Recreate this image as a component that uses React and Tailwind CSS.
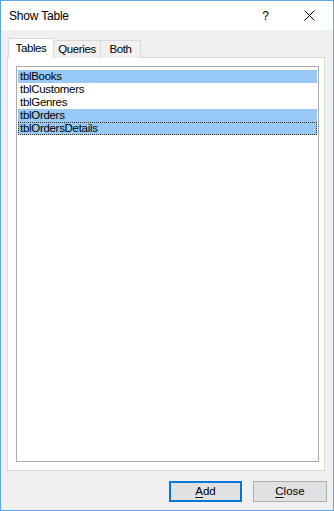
import React from "react";

const font = { fontFamily: '"Liberation Sans", Arial, sans-serif' };

function Row({ label, selected, focused }) {
  return (
    <div
      className={
        "h-[13px] leading-[13px] pl-[2px] text-[11.5px] tracking-[-0.3px] text-black " +
        (selected ? "bg-[#99c9f7] " : "") +
        (focused ? "outline outline-1 outline-dotted outline-[#333] -outline-offset-1" : "")
      }
    >
      {label}
    </div>
  );
}

export default function App() {
  return (
    <div
      className="w-[334px] h-[511px] border border-[#5ea6e4] bg-[#f0f0f0] flex flex-col"
      style={font}
    >
      <div className="h-[29px] bg-white flex items-center shrink-0">
        <span className="ml-[8px] text-[12px] tracking-[-0.2px] text-black">Show Table</span>
        <span className="ml-auto mr-[35px] text-[12px] text-black">?</span>
        <svg width="11" height="11" viewBox="0 0 11 11" className="mr-[18px]">
          <path d="M0.5 0.5 L10.5 10.5 M10.5 0.5 L0.5 10.5" stroke="#000" strokeWidth="1" />
        </svg>
      </div>
      <div className="flex-1 flex flex-col px-[6px] pt-[8px]">
        <div className="flex items-end h-[20px] ml-[1px] -mb-px relative z-10">
          <div className="h-[20px] w-[46px] bg-white border border-b-0 border-[#d9d9d9] flex items-center justify-center text-[11.5px] tracking-[-0.4px] text-black">
            Tables
          </div>
          <div className="h-[18px] w-[47px] bg-[#f0f0f0] border border-l-0 border-b-0 border-[#d9d9d9] flex items-center justify-center text-[11.5px] tracking-[-0.4px] text-black">
            Queries
          </div>
          <div className="h-[18px] w-[40px] bg-[#f0f0f0] border border-l-0 border-b-0 border-[#d9d9d9] flex items-center justify-center text-[11.5px] tracking-[-0.4px] text-black">
            Both
          </div>
        </div>
        <div className="w-[318px] h-[414px] bg-white border border-[#d9d9d9] pt-[8px] pl-[8px] pr-[5px] pb-[8px] flex">
          <div className="flex-1 border border-[#acacac] px-[1px] pt-[3px] flex flex-col">
            <Row label="tblBooks" selected />
            <Row label="tblCustomers" />
            <Row label="tblGenres" />
            <Row label="tblOrders" selected />
            <Row label="tblOrdersDetails" selected focused />
          </div>
        </div>
        <div className="flex justify-end gap-[11px] mt-[10px]">
          <button className="w-[73px] h-[21px] bg-[#e1e1e1] border-2 border-[#0078d7] text-[11.5px] text-black leading-none">
            <span className="underline underline-offset-2">A</span>dd
          </button>
          <button className="w-[74px] h-[21px] bg-[#e1e1e1] border border-[#adadad] text-[11.5px] text-black leading-none">
            <span className="underline underline-offset-2">C</span>lose
          </button>
        </div>
      </div>
    </div>
  );
}
